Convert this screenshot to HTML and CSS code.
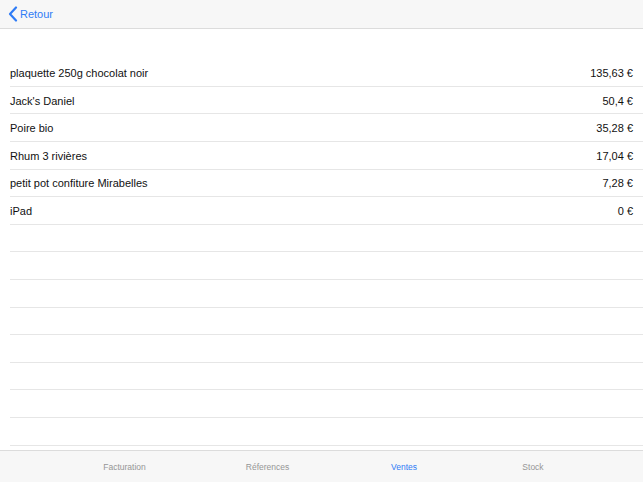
FILE: index.html
```html
<!DOCTYPE html>
<html lang="fr">
<head>
    <meta charset="UTF-8">
    <meta name="viewport" content="width=device-width, initial-scale=1.0">
    <title>Ventes</title>
    <link rel="stylesheet" href="styles.css">
</head>
<body>
    <div class="app">
        <header class="navbar">
            <a class="back" href="#">
                <svg class="chevron" width="10" height="16" viewBox="0 0 10 16">
                    <path d="M8 1.5 L2 8 L8 14.5" fill="none" stroke="#2f7cf6" stroke-width="2.2" stroke-linecap="round" stroke-linejoin="round"/>
                </svg>
                Retour
            </a>
        </header>

        <main class="content">
            <ul class="sales">
                <li class="row"><span>plaquette 250g chocolat noir</span><span>135,63 €</span></li>
                <li class="row"><span>Jack's Daniel</span><span>50,4 €</span></li>
                <li class="row"><span>Poire bio</span><span>35,28 €</span></li>
                <li class="row"><span>Rhum 3 rivières</span><span>17,04 €</span></li>
                <li class="row"><span>petit pot confiture Mirabelles</span><span>7,28 €</span></li>
                <li class="row"><span>iPad</span><span>0 €</span></li>
                <li class="row"></li>
                <li class="row"></li>
                <li class="row"></li>
                <li class="row"></li>
                <li class="row"></li>
                <li class="row"></li>
                <li class="row"></li>
                <li class="row"></li>
            </ul>
        </main>

        <nav class="tabbar">
            <a class="tab" href="#">Facturation</a>
            <a class="tab" href="#">Réferences</a>
            <a class="tab active" href="#">Ventes</a>
            <a class="tab" href="#">Stock</a>
        </nav>
    </div>
</body>
</html>
```

FILE: styles.css
```css
html, body {
    margin: 0;
    padding: 0;
    height: 100%;
    background: white;
}
body {
    font-family: "Liberation Sans", Arial, sans-serif;
    color: #111;
    overflow: hidden;
}
.app {
    display: flex;
    flex-direction: column;
    height: 482px;
}
.navbar {
    height: 28px;
    background: #f7f7f7;
    border-bottom: 1px solid #dcdcdc;
    display: flex;
    align-items: center;
    padding-left: 8px;
    flex-shrink: 0;
}
.back {
    display: flex;
    align-items: center;
    gap: 2px;
    color: #2f7cf6;
    text-decoration: none;
    font-size: 11px;
}
.chevron {
    display: block;
}
.content {
    flex: 1;
    padding-top: 30.2px;
    overflow: hidden;
}
.sales {
    list-style: none;
    margin: 0;
    padding: 0 0 0 10px;
}
.row {
    height: 27.6px;
    box-sizing: border-box;
    border-bottom: 1px solid #e6e6e6;
    display: flex;
    align-items: center;
    justify-content: space-between;
    padding: 1px 10px 0 0;
    font-size: 11px;
}
.tabbar {
    height: 31px;
    background: #f7f7f7;
    border-top: 1px solid #dcdcdc;
    display: grid;
    grid-template-columns: 145px 141px 132px 126px;
    flex-shrink: 0;
    padding-left: 52px;
    align-items: center;
}
.tab {
    text-align: center;
    font-size: 8.5px;
    color: #969696;
    text-decoration: none;
}
.tab.active {
    color: #2f7cf6;
}
```
